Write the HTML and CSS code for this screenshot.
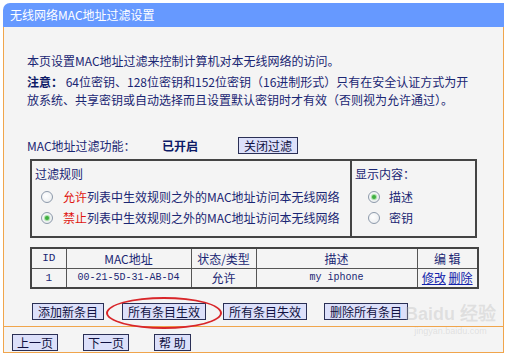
FILE: index.html
```html
<!DOCTYPE html>
<html lang="zh-CN">
<head>
<meta charset="utf-8">
<title>无线网络MAC地址过滤设置</title>
<link rel="stylesheet" href="styles.css">
</head>
<body>
<div class="frame">
  <div class="title">无线网络MAC地址过滤设置</div>
  <div class="panel">
    <div class="content">
      <p class="intro">本页设置MAC地址过滤来控制计算机对本无线网络的访问。</p>
      <p class="note"><b>注意：</b> 64位密钥、128位密钥和152位密钥（16进制形式）只有在安全认证方式为开<br>放系统、共享密钥或自动选择而且设置默认密钥时才有效（否则视为允许通过）。</p>
      <div class="status-row">
        <span class="status-label">MAC地址过滤功能：</span>
        <b class="status-state">已开启</b>
        <button class="btn" type="button">关闭过滤</button>
      </div>
      <div class="rules">
        <div class="rules-main">
          <div class="rules-head">过滤规则</div>
          <div class="radio-row"><span class="radio"></span><span><em class="red">允许</em>列表中生效规则之外的MAC地址访问本无线网络</span></div>
          <div class="radio-row"><span class="radio checked"></span><span><em class="red">禁止</em>列表中生效规则之外的MAC地址访问本无线网络</span></div>
        </div>
        <div class="rules-side">
          <div class="rules-head">显示内容：</div>
          <div class="radio-row"><span class="radio checked"></span><span>描述</span></div>
          <div class="radio-row"><span class="radio"></span><span>密钥</span></div>
        </div>
      </div>
      <table class="list">
        <thead>
          <tr><th class="c-id mono big">ID</th><th class="c-mac">MAC地址</th><th class="c-state">状态/类型</th><th class="c-desc">描述</th><th class="c-edit">编 辑</th></tr>
        </thead>
        <tbody>
          <tr><td class="mono big">1</td><td class="mono">00-21-5D-31-AB-D4</td><td>允许</td><td class="mono">my iphone</td><td><a href="#">修改</a> <a href="#">删除</a></td></tr>
        </tbody>
      </table>
      <div class="actions">
        <button class="btn" type="button">添加新条目</button>
        <span class="marked"><button class="btn" type="button">所有条目生效</button><span class="ellipse"></span></span>
        <button class="btn" type="button">所有条目失效</button>
        <button class="btn" type="button">删除所有条目</button>
      </div>
    </div>
    <div class="footer">
      <button class="btn" type="button">上一页</button>
      <button class="btn" type="button">下一页</button>
      <button class="btn" type="button">帮 助</button>
    </div>
  </div>
  <div class="watermark"><span class="wm-logo">Bai<span class="wm-paw">du</span> 经验</span><span class="wm-url">jingyan.baidu.com</span></div>
</div>
</body>
</html>
```

FILE: styles.css
```css
* { box-sizing: border-box; }
html, body { margin: 0; padding: 0; background: #ffffff; }
body {
  font-family: "Noto Sans CJK SC", "Noto Sans", sans-serif;
  font-size: 12px;
  color: #1a2673;
}
.frame {
  position: relative;
  width: 501px;
  margin: 3px 0 0 3px;
}
.title {
  height: 24px;
  line-height: 23px;
  background: #6699ff;
  color: #ffffff;
  font-size: 12px;
  padding-left: 7px;
  border-top-left-radius: 7px;
}
.panel {
  background: #f4f4f4;
  border: 1px solid #f0a54c;
  border-top: none;
}
.content {
  padding: 25px 0 6px 23px;
}
p { margin: 0; line-height: 18px; }
.note { margin-top: 3px; }
.note b { font-weight: bold; color: #0d1a66; }
.status-row {
  margin-top: 28px;
  display: flex;
  align-items: center;
  height: 17px;
}
.status-label { width: 135px; }
.status-state { width: 76px; font-weight: bold; color: #0d1a66; }
.btn {
  font-family: "Noto Sans CJK SC", sans-serif;
  font-size: 12px;
  line-height: 15px;
  height: 17px;
  padding: 0 5px;
  margin: 0;
  color: #101040;
  background: #dce0fa;
  border: 1px solid #2a2f55;
  border-radius: 0;
}
.rules {
  margin: 5px 0 0 3px;
  width: 447px;
  height: 79px;
  display: flex;
  border: 2px solid #444;
}
.rules-main { width: 320px; border-right: 2px solid #444; padding: 4px 0 0 3px; }
.rules-side { flex: 1; padding: 4px 0 0 3px; }
.rules-head { line-height: 18px; }
.radio-row {
  display: flex;
  align-items: center;
  height: 21px;
}
.rules-main .radio-row:nth-child(2) { margin-top: 3px; }
.rules-side .radio-row:nth-child(2) { margin-top: 3px; }
.rules-main .radio { margin: 0 10px 0 6px; }
.rules-side .radio { margin: 0 9px 0 13px; }
.radio {
  width: 12px;
  height: 12px;
  border-radius: 50%;
  border: 1px solid #8d9aab;
  background: radial-gradient(circle at 40% 40%, #ffffff 0%, #eef0f2 70%, #d8dde3 100%);
  position: relative;
  flex: none;
}
.radio.checked::after {
  content: "";
  position: absolute;
  left: 3px;
  top: 3px;
  width: 4px;
  height: 4px;
  border-radius: 50%;
  background: #3fae3f;
  box-shadow: 0 0 1px 1px rgba(100, 200, 100, 0.6);
}
.red { color: #e0140f; font-style: normal; }
.list {
  margin: 9px 0 0 3px;
  width: 447px;
  border-collapse: collapse;
  border: 2px solid #444;
  table-layout: fixed;
}
.list th, .list td {
  border: 1px solid #555;
  height: 20px;
  padding: 0;
  text-align: center;
  font-weight: normal;
  white-space: nowrap;
}
.c-id { width: 35px; }
.c-mac { width: 125px; }
.c-state { width: 65px; }
.c-desc { width: 161px; }
.c-edit { width: 61px; }
.mono { font-family: "Liberation Mono", "DejaVu Sans Mono", monospace; font-size: 10px; }
.mono.big { font-size: 11px; }
.list a { color: #1122aa; text-decoration: underline; }
.actions {
  margin: 14px 0 0 5px;
  display: flex;
  gap: 17px;
}
.marked { position: relative; display: inline-flex; margin-left: 1px; }
.ellipse {
  position: absolute;
  left: -16px;
  top: -6px;
  width: 116px;
  height: 32px;
  border: 2px solid #d8262a;
  border-radius: 50%;
  pointer-events: none;
}
.footer {
  border-top: 1px solid #f0a54c;
  height: 26px;
  padding: 7px 0 0 8px;
  display: flex;
  gap: 25px;
  align-items: flex-start;
}
.footer .btn { padding: 0 4px; }
.watermark {
  position: absolute;
  left: 402px;
  top: 300px;
  display: flex;
  flex-direction: column;
  align-items: center;
  color: rgba(185, 185, 185, 0.35);
  pointer-events: none;
}
.wm-logo { font-family: "Liberation Sans", sans-serif; font-size: 18px; font-weight: bold; line-height: 22px; }
.wm-url { font-family: "Liberation Sans", sans-serif; font-size: 9px; line-height: 12px; }
```
